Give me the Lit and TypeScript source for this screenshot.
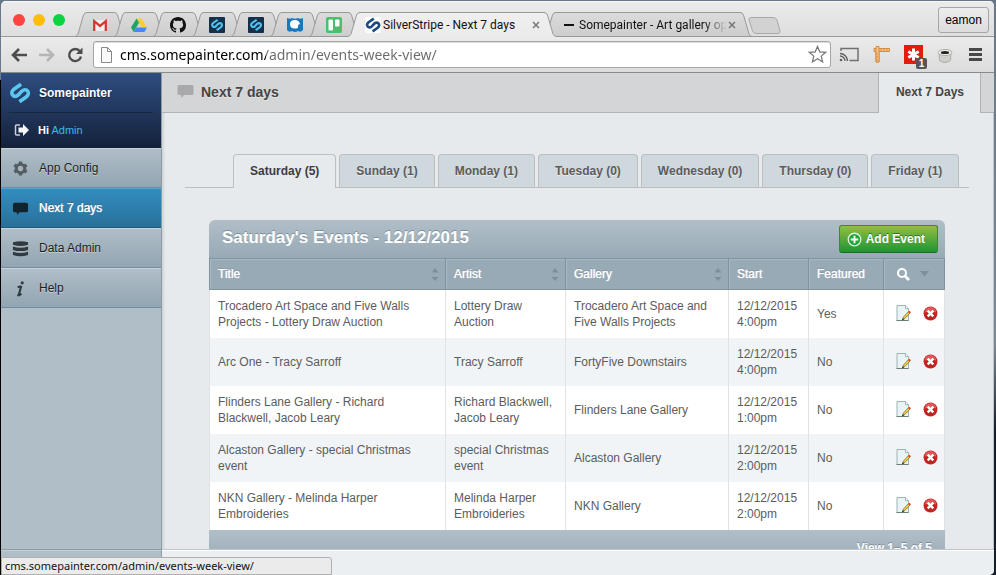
import { LitElement, html, svg, css, nothing } from "lit";
import { customElement, property, state } from "lit/decorators.js";
import { classMap } from "lit/directives/class-map.js";

const sPath = svg`<path d="M11 2L4.500 6.500Q.8 9.800 4 12.500Q6 14 8.500 11.700L11.500 8.500Q14 6.300 16.300 7.500Q19.300 10.200 15.800 13.500L9.500 18" fill="none" stroke="currentColor" stroke-width="3.300"/>`;

const favicons: Record<string, unknown> = {
  gmail: svg`<rect x="1" y="3" width="14" height="11" rx="1" fill="#eee"/><path d="M2.2 14V4.2L8 9l5.800-4.800V14" fill="none" stroke="#d6392f" stroke-width="2.300"/>`,
  drive: svg`<path d="M5.500 1.500h5L16 10.500h-5.200z" fill="#fc3"/><path d="M5.500 1.500L0 10.600 2.600 15 8 5.800z" fill="#1fa463"/><path d="M5.300 10.500H16L13.400 15H2.600z" fill="#4688f4"/>`,
  github: svg`<path fill="#111" d="M8 0C3.580 0 0 3.580 0 8c0 3.540 2.290 6.530 5.470 7.590.4.070.55-.17.55-.38 0-.19-.01-.82-.01-1.490-2.010.37-2.530-.49-2.690-.94-.09-.23-.48-.94-.82-1.130-.28-.15-.68-.52-.01-.53.63-.01 1.080.58 1.230.82.72 1.210 1.870.87 2.330.66.07-.52.28-.87.51-1.070-1.780-.2-3.640-.89-3.640-3.950 0-.87.31-1.590.82-2.150-.08-.2-.36-1.020.08-2.120 0 0 .67-.21 2.200.82.64-.18 1.320-.27 2-.27s1.360.09 2 .27c1.530-1.040 2.200-.82 2.200-.82.44 1.100.16 1.920.08 2.120.51.56.82 1.270.82 2.150 0 3.070-1.870 3.750-3.650 3.950.29.25.54.73.54 1.480 0 1.070-.01 1.930-.01 2.200 0 .21.15.46.55.38A8.010 8.010 0 0016 8c0-4.420-3.580-8-8-8z"/>`,
  silver: svg`<rect width="16" height="16" rx="1" fill="#15304a"/><g color="#4fc3f0" transform="translate(1.500 1.500) scale(.65)">${sPath}</g>`,
  whale: svg`<path d="M0 1q3 1.500 5 0 3 1.500 6 0 2 1.500 5 0v12q-2 3-5 1-3 2-6 0-3 2-5-1z" fill="#1879bd"/><path d="M3 7q0-4 5-4 4 0 5 4l-2 1q1 4-3 3.500-5 0-5-4.500z" fill="#fff"/>`,
  trello: svg`<rect width="16" height="16" rx="2" fill="#4bbf6b"/><rect x="2.500" y="2.500" width="4.500" height="11" rx="1" fill="#fff"/><rect x="9" y="2.500" width="4.500" height="7" rx="1" fill="#fff"/>`,
  stripe: svg`<rect width="16" height="16" rx="2" fill="#fff"/><g color="#1a4a80" transform="scale(.8)">${sPath}</g>`,
  dash: svg`<rect x="3" y="7" width="10" height="2" fill="#111"/>`,
};

const icon = (body: unknown, size = 16, box = 16, cls = "") =>
  html`<svg class=${cls} width=${size} height=${size} viewBox="0 0 ${box} ${box}" aria-hidden="true">${body}</svg>`;

@customElement("browser-tab")
class BrowserTab extends LitElement {
  @property() icon = "";
  @property() label = "";
  @property({ type: Boolean, reflect: true }) active = false;
  static styles = css`
    :host { display: block; position: relative; height: 25px; flex: none; width: 51px; margin-right: -12px; color: #111; }
    :host([label]:not([label=""])) { width: 208px; }
    :host([active]) { z-index: 20; }
    .shape { position: absolute; inset: 0; }
    .row { position: relative; display: flex; align-items: center; height: 25px; box-sizing: border-box; padding: 1px 14px 0 17px; gap: 2px; }
    .fav { flex: none; }
    .label { flex: 1; font: 12px/16px Roboto, sans-serif; white-space: nowrap; overflow: hidden; text-align: left; }
    :host(:not([active])) .label { -webkit-mask-image: linear-gradient(to right, #000 125px, transparent 148px); }
    button { border: 0; background: none; padding: 0; width: 10px; height: 16px; display: flex; align-items: center; }
  `;
  render() {
    const w = this.label ? 208 : 51;
    const d = `M0 24.500Q2 24 3 22L8.500 3Q9.500 .5 12 .5H${w - 12}Q${w - 9.5} .5 ${w - 8.5} 3L${w - 3} 22Q${w - 2} 24 ${w} 24.500`;
    return html`
      <svg class="shape" width=${w} height="25" viewBox="0 0 ${w} 25" aria-hidden="true">
        <defs><linearGradient id="g" x2="0" y2="1"><stop stop-color=${this.active ? "#efefef" : "#dcdcdc"}></stop><stop offset="1" stop-color=${this.active ? "#ebebeb" : "#cdcdcd"}></stop></linearGradient></defs>
        ${this.active ? svg`<path d="${d}V25H0z" fill="url(#g)"/>` : svg`<path d="${d}z" fill="url(#g)"/>`}
        <path d=${d} fill="none" stroke="#999"></path>
        ${this.active ? nothing : svg`<path d="M0 24.500H${w}" stroke="#999"/>`}
      </svg>
      <div class="row">
        <svg class="fav" width="16" height="16" viewBox="0 0 16 16" aria-hidden="true">${favicons[this.icon]}</svg>
        ${this.label
          ? html`<span class="label">${this.label}</span>
              <button aria-label="Close tab"><svg width="8" height="8" viewBox="0 0 8 8"><path d="M1 1l6 6M7 1L1 7" stroke="#777" stroke-width="1.500"/></svg></button>`
          : nothing}
      </div>`;
  }
}

@customElement("browser-chrome")
class BrowserChrome extends LitElement {
  static styles = css`
    :host { display: block; flex: none; }
    button { border: 0; background: none; padding: 0; display: flex; align-items: center; justify-content: center; flex: none; }
    .strip { display: flex; height: 36px; box-sizing: border-box; padding-left: 12px; background: linear-gradient(#ebebeb, #dedede); box-shadow: inset 0 -1px #999, inset 0 1px #f8f8f8; }
    .lights { display: flex; gap: 8px; padding-top: 13px; width: 62px; flex: none; }
    .light { width: 12px; height: 12px; border-radius: 50%; background: #fc4440; }
    .light.min { background: #fdbd0a; }
    .light.max { background: #0cd33f; }
    .tabs { display: flex; align-self: flex-end; flex: none; }
    .new { align-self: flex-end; margin: 0 0 3px 8px; }
    .spacer { flex: 1; }
    .user { width: 51px; height: 26px; margin: 6px 5px 0 0; border: 1px solid #a6a6a6; border-radius: 3px; background: linear-gradient(#ededed, #dcdcdc); font: 12px "Liberation Sans", Arial, sans-serif; color: #000; }
    .bar { display: flex; align-items: center; height: 36px; box-sizing: border-box; border-bottom: 1px solid #8a8a8a; padding: 0 10px 0 9px; background: linear-gradient(#ebebeb, #dcdcdc); }
    .nav { display: flex; gap: 10px; }
    .omni { flex: 1; min-width: 0; display: flex; align-items: center; height: 27px; box-sizing: border-box; border: 1px solid #a5a5a5; border-radius: 3px; background: #fff; margin: 0 8px 0 9px; padding: 0 3px 0 6px; gap: 7px; box-shadow: inset 0 1px #ddd; }
    .url { flex: 1; min-width: 0; border: 0; outline: 0; padding: 0; height: 20px; font: 14px/20px "Noto Sans", sans-serif; background: linear-gradient(to right, #000 146px, #6a6a6a 146px) text; -webkit-text-fill-color: transparent; }
    .ext { display: flex; gap: 13px; }
    .wrap { position: relative; }
    .badge { position: absolute; left: 12px; top: 13px; width: 11px; height: 11px; border-radius: 2px; background: #555; color: #fff; font: bold 10px/11px "Liberation Sans", sans-serif; text-align: center; }
  `;
  render() {
    const pinned = ["gmail", "drive", "github", "silver", "silver", "whale", "trello"];
    return html`
      <div class="strip">
        <div class="lights"><span class="light"></span><span class="light min"></span><span class="light max"></span></div>
        <div class="tabs">
          ${pinned.map((p) => html`<browser-tab icon=${p}></browser-tab>`)}
          <browser-tab icon="stripe" label="SilverStripe - Next 7 days" active></browser-tab>
          <browser-tab icon="dash" label="Somepainter - Art gallery opening"></browser-tab>
        </div>
        <button class="new" aria-label="New tab"><svg width="33" height="17" viewBox="0 0 33 17"><path d="M3 .5H25Q28 .5 29 3L32 14Q32 16.500 30 16.500H8Q5.500 16.500 4.500 14L1 3Q.5 .5 3 .5z" fill="#d2d2d2" stroke="#a8a8a8"/></svg></button>
        <span class="spacer"></span>
        <button class="user">eamon</button>
      </div>
      <div class="bar">
        <div class="nav">
          <button aria-label="Back">${icon(svg`<path d="M9 3L3 9l6 6M3 9h14" fill="none" stroke="#4d4d4d" stroke-width="2.600"/>`, 18, 18)}</button>
          <button aria-label="Forward">${icon(svg`<path d="M9 3l6 6-6 6M15 9H1" fill="none" stroke="#b5b5b5" stroke-width="2.600"/>`, 18, 18)}</button>
          <button aria-label="Reload">${icon(svg`<path d="M14 5.500A6 6 0 1 0 15 10.500" fill="none" stroke="#4d4d4d" stroke-width="2.400"/><path d="M16.500 1.500V8H10z" fill="#4d4d4d"/>`, 18, 18)}</button>
        </div>
        <div class="omni">
          <svg width="13" height="16" viewBox="0 0 13 16" aria-hidden="true"><path d="M1.500 .5h6l4 4v11h-10zM7.500 .5v4h4" fill="#fafafa" stroke="#888"/></svg>
          <input class="url" aria-label="Address" value="cms.somepainter.com/admin/events-week-view/" />
          <button aria-label="Bookmark this page">${icon(svg`<path d="M10 1.500l2.400 5.700 6.200.5-4.700 4 1.500 6.100L10 14.500l-5.400 3.300 1.500-6.100-4.700-4 6.200-.5z" fill="#fff" stroke="#777" stroke-width="1.300"/>`, 19, 20)}</button>
        </div>
        <div class="ext">
          <button aria-label="Cast">${icon(svg`<path d="M2 6V3.500h17v12h-8.500" fill="none" stroke="#707070" stroke-width="1.500"/><path d="M1 8.500a7.500 7.500 0 0 1 7.500 7.500M1 11a5 5 0 0 1 5 5" fill="none" stroke="#606060" stroke-width="1.300"/><circle cx="2" cy="15" r="1.300" fill="#606060"/>`, 20, 20)}</button>
          <button aria-label="Page ruler">${icon(svg`<path d="M2 3.500H17.500v3H7V17H4V6.500H2z" fill="#f8c48c" stroke="#d68b3e"/><path d="M4 1.500h3v15.500H4z" fill="#f8c48c" stroke="#d68b3e"/><path d="M9 4v2M12 4v2M15 4v2M4 9h2M4 12h2M4 15h2" stroke="#d68b3e"/>`, 19, 19)}</button>
          <button class="wrap" aria-label="Passwords">${icon(svg`<rect width="19" height="19" fill="#e31b0c"/><path d="M9.500 3.500v12M4.300 6.500l10.400 6M14.700 6.500l-10.400 6" stroke="#fff" stroke-width="3"/>`, 19, 19)}<span class="badge">1</span></button>
          <button aria-label="Cache">${icon(svg`<path d="M3 7l.5 7.500q5.500 4 11 0L15 7z" fill="#cfcfca" stroke="#adada8"/><ellipse cx="9" cy="6.500" rx="6.800" ry="3" fill="#f2f2ee" stroke="#aaa"/><ellipse cx="9" cy="6.500" rx="4.200" ry="1.600" fill="#222"/>`, 18, 18)}</button>
          <button aria-label="Menu">${icon(svg`<path d="M2 3.500h13M2 8.500h13M2 13.500h13" stroke="#484848" stroke-width="3"/>`, 17, 17)}</button>
        </div>
      </div>`;
  }
}

@customElement("cms-sidebar")
class CmsSidebar extends LitElement {
  static styles = css`
    :host { display: flex; flex-direction: column; flex: none; width: 160px; background: #b0bec7; border-right: 1px solid #8e9ba4; font: 12px/16px "Liberation Sans", Arial, sans-serif; }
    a { text-decoration: none; }
    .head { background: linear-gradient(#2f4d80, #14213a); height: 75px; box-sizing: border-box; padding: 0 8px; color: #fff; }
    .brand, .user { display: flex; align-items: center; }
    .brand { height: 39px; gap: 8px; font-weight: bold; color: #fff; border-bottom: 1px solid #16293f; text-shadow: 0 1px 1px #14213a; }
    .brand svg { color: #5bc6ef; }
    .user { height: 34px; gap: 8px; padding-left: 5px; font-size: 11px; }
    .user a { color: #3ebae0; }
    .item { display: flex; align-items: center; gap: 10px; height: 40px; box-sizing: border-box; padding-left: 11px; color: #1f1f1f; background: linear-gradient(#b0bec7, #92a5b2); border-top: 1px solid #c9d3d9; border-bottom: 1px solid #748d9d; text-shadow: 0 1px #c5d0d7; }
    .item.on { color: #fff; background: linear-gradient(#338dc1, #287099); border-top-color: #55a4d2; border-bottom-color: #1f5a7c; text-shadow: 0 0 1px #fff, 0 -1px #1f5a7c; }
    .item svg { color: #555d63; }
    .item.on svg { color: #12232e; }
    .fill { flex: 1; }
    .toggle { height: 26px; border: 0; border-top: 1px solid #8e9ba4; background: #b0bec7; box-shadow: inset 0 1px #c5d0d7; padding: 5px 0 0 7px; text-align: left; }
  `;
  render() {
    const items: [string, unknown][] = [
      ["App Config", svg`<path d="M9 1.500v15M2.500 5.300l13 7.500M2.500 12.800l13-7.500" stroke="currentColor" stroke-width="3.600"/><circle cx="9" cy="9" r="4.400" fill="none" stroke="currentColor" stroke-width="3.400"/><circle cx="9" cy="9" r="2.800" fill="#a3b2bd"/>`],
      ["Next 7 days", svg`<path d="M3 3h12q2 0 2 2v6q0 2-2 2H8l-2.500 3L5 13H3q-2 0-2-2V5q0-2 2-2z" fill="currentColor"/>`],
      ["Data Admin", svg`<path d="M1 2.500q8-2.500 16 0v2.500q-8 2.500-16 0zM1 7q8 2.500 16 0v3.500q-8 2.500-16 0zM1 12.500q8 2.500 16 0V16q-8 2.500-16 0z" fill="#333a3f"/>`],
      ["Help", svg`<circle cx="10.800" cy="3" r="1.700" fill="#333a3f"/><path d="M6 7.800Q8.500 6.500 9.600 7L7.300 15.500Q8.500 16 10 14.500" fill="none" stroke="#333a3f" stroke-width="2.200"/><path d="M5.500 16.200h3" stroke="#333a3f" stroke-width="2"/>`],
    ];
    return html`
      <div class="head">
        <a class="brand" href="#home">${icon(sPath, 22, 20)}Somepainter</a>
        <div class="user">
          <svg width="16" height="14" viewBox="0 0 16 14" aria-hidden="true"><path d="M6 2H2.500Q1.500 2 1.500 3v8q0 1 1 1H6" fill="none" stroke="#c8ced6" stroke-width="1.500"/><path d="M4.500 4.500H9V1l6 6-6 6V9.500H4.500z" fill="#f4f6f8"/></svg>
          <span><b>Hi</b> <a href="#profile">Admin</a></span>
        </div>
      </div>
      <nav>${items.map(([label, body]) => html`<a href="#" class=${classMap({ item: true, on: label === "Next 7 days" })}>${icon(body, 17, 18)}${label}</a>`)}</nav>
      <div class="fill"></div>
      <button class="toggle" aria-label="Collapse menu"><svg width="12" height="12" viewBox="0 0 12 12"><circle cx="6" cy="6" r="5" fill="#444d53"/></svg></button>`;
  }
}

interface Row { title: string; artist: string; gallery: string; date: string; time: string; featured: string }

@customElement("event-grid")
class EventGrid extends LitElement {
  private rows: Row[] = [
    { title: "Trocadero Art Space and Five Walls Projects - Lottery Draw Auction", artist: "Lottery Draw Auction", gallery: "Trocadero Art Space and Five Walls Projects", date: "12/12/2015", time: "4:00pm", featured: "Yes" },
    { title: "Arc One - Tracy Sarroff", artist: "Tracy Sarroff", gallery: "FortyFive Downstairs", date: "12/12/2015", time: "4:00pm", featured: "No" },
    { title: "Flinders Lane Gallery - Richard Blackwell, Jacob Leary", artist: "Richard Blackwell, Jacob Leary", gallery: "Flinders Lane Gallery", date: "12/12/2015", time: "1:00pm", featured: "No" },
    { title: "Alcaston Gallery - special Christmas event", artist: "special Christmas event", gallery: "Alcaston Gallery", date: "12/12/2015", time: "2:00pm", featured: "No" },
    { title: "NKN Gallery - Melinda Harper Embroideries", artist: "Melinda Harper Embroideries", gallery: "NKN Gallery", date: "12/12/2015", time: "2:00pm", featured: "No" },
  ];
  static styles = css`
    :host { display: block; font: 12px/16px "Liberation Sans", Arial, sans-serif; color: #5c5c5c; }
    button { border: 0; background: none; padding: 0; font: inherit; }
    .top { display: flex; align-items: center; justify-content: space-between; height: 38px; padding: 0 7px 0 13px; border-radius: 6px 6px 0 0; background: linear-gradient(#b0bec7, #98aab6); }
    h2 { margin: 0; padding-bottom: 3px; font-size: 17px; line-height: 20px; color: #fff; text-shadow: 0 -1px #7b8f9c; }
    .add { display: flex; align-items: center; gap: 4px; height: 28px; padding: 0 12px 0 7px; border: 1px solid #29903a; border-bottom-color: #1a6b25; border-radius: 3px; background: linear-gradient(#93be42, #1f9433); color: #fff; font-weight: bold; text-shadow: 0 -1px #1f7a2b; }
    table { width: 100%; border-collapse: separate; border-spacing: 0; table-layout: fixed; }
    .c-artist { width: 120px; }
    .c-gallery { width: 163px; }
    .c-start { width: 80px; }
    .c-feat { width: 75px; }
    .c-act { width: 61px; }
    th { height: 32px; box-sizing: border-box; padding: 0 6px 0 8px; border: 1px solid #7f929f; border-width: 1px 1px 1px 0; box-shadow: inset 1px 1px #a8b7c1; background: #98aab6; color: #fff; font-weight: normal; text-align: left; text-shadow: 0 0 1px #fff, 0 -1px #7b8f9c; }
    th:first-child, td:first-child { border-left-width: 1px; }
    .sort { display: flex; width: 100%; align-items: center; justify-content: space-between; color: inherit; text-shadow: inherit; }
    td { height: 48px; box-sizing: border-box; padding: 8px; border: 0 solid #dfe3e6; border-right-width: 1px; background: #fff; vertical-align: middle; }
    td:last-child { padding: 7px 0 9px 11px; }
    tr:nth-child(even) td { background: #f0f4f7; }
    .tools { display: flex; align-items: center; gap: 9px; padding-left: 3px; }
    .tools button { display: flex; }
    .acts { display: flex; align-items: center; gap: 12px; }
    .acts button { display: flex; }
    .foot { height: 36px; box-sizing: border-box; padding: 10px 13px 0 0; text-align: right; font-weight: bold; color: #fff; background: linear-gradient(#b0bec7, #98aab6); text-shadow: 0 -1px #7b8f9c; }
  `;
  private sortable(label: string) {
    return html`<button class="sort">${label}<svg width="8" height="15" viewBox="0 0 8 15" aria-hidden="true"><path d="M4 1l3.500 4.500H.5zM4 14l3.500-4H.5z" fill="#7f8f9a"/></svg></button>`;
  }
  render() {
    return html`
      <div class="top">
        <h2>Saturday's Events - 12/12/2015</h2>
        <button class="add">
          ${icon(svg`<circle cx="8" cy="8" r="6.700" fill="#1fa83a" stroke="#dff3df" stroke-width="1.400"/><path d="M8 4v8M4 8h8" stroke="#fff" stroke-width="2"/>`, 15)}Add Event
        </button>
      </div>
      <table>
        <colgroup><col /><col class="c-artist" /><col class="c-gallery" /><col class="c-start" /><col class="c-feat" /><col class="c-act" /></colgroup>
        <thead><tr>
          <th>${this.sortable("Title")}</th><th>${this.sortable("Artist")}</th><th>${this.sortable("Gallery")}</th><th>Start</th><th>Featured</th>
          <th><div class="tools"><button aria-label="Filter">${icon(svg`<circle cx="7" cy="7" r="4" fill="none" stroke="#fff" stroke-width="2"/><path d="M10 10l4 4" stroke="#fff" stroke-width="2.600"/>`)}</button><svg width="9" height="6" viewBox="0 0 9 6"><path d="M0 0h9L4.500 5.500z" fill="#7f8f9a"/></svg></div></th>
        </tr></thead>
        <tbody>${this.rows.map((r) => html`<tr>
          <td>${r.title}</td><td>${r.artist}</td><td>${r.gallery}</td><td>${r.date}<br />${r.time}</td><td>${r.featured}</td>
          <td><div class="acts">
            <button aria-label="Edit">${icon(svg`<path d="M2 .5h8.500l3 3v12H2z" fill="#e9f3f3" stroke="#9fb3b3"/><path d="M10.500 .5v3h3" fill="#fff" stroke="#9fb3b3"/><path d="M1.500 15.500h12" stroke="#6d7d7d"/><path d="M7.500 14.500L8.500 12 13.500 6.500 15 8 10 13.500z" fill="#e8cf4a" stroke="#7a6a20" stroke-width=".7"/><path d="M13 7l1.300-1.300L16 7.200 14.600 8.600z" fill="#d8402e"/><path d="M7 15.200l.9-2 1.300 1.200z" fill="#222"/>`)}</button>
            <button aria-label="Delete">${icon(svg`<circle cx="8" cy="8" r="7.400" fill="#cc1f22"/><path d="M2 7a6 6 0 0 1 12 0q-6-2-12 0z" fill="#e35a55"/><path d="M5 5l6 6M11 5l-6 6" stroke="#fff" stroke-width="2.600"/>`, 15)}</button>
          </div></td>
        </tr>`)}</tbody>
      </table>
      <div class="foot">View 1–5 of 5</div>`;
  }
}

@customElement("app-root")
class AppRoot extends LitElement {
  @state() private day = 0;
  private days = ["Saturday (5)", "Sunday (1)", "Monday (1)", "Tuesday (0)", "Wednesday (0)", "Thursday (0)", "Friday (1)"];
  static styles = css`
    :host { display: block; height: 100vh; box-sizing: border-box; padding: 1px 2px 0 1px; background: linear-gradient(#000, #000) 0 80px / 1px 100% no-repeat, linear-gradient(#66778a, #7a8998 60%, #161d2c 75%); font: 12px/16px "Liberation Sans", Arial, sans-serif; position: relative; }
    .window { display: flex; flex-direction: column; height: 100%; overflow: hidden; border-radius: 5px; background: #e6eaed; }
    .body { flex: 1; display: flex; min-height: 0; }
    main { flex: 1; min-width: 0; display: flex; flex-direction: column; box-shadow: inset 2px 0 2px #d0d5d9, inset -1px 0 #bfc5ca; }
    .title { display: flex; justify-content: space-between; flex: none; height: 40px; box-sizing: border-box; border-bottom: 1px solid #b3b3b7; background: #d4d5d7; padding-right: 13px; }
    h1 { display: flex; align-items: center; gap: 7px; margin: 0; padding: 0 0 2px 15px; font-size: 14px; color: #444; text-shadow: 0 1px #e6e6e8; }
    .view { display: flex; align-items: center; height: 40px; box-sizing: border-box; padding: 0 16px 2px 17px; border: 1px solid #b3b3b7; border-width: 0 1px; background: #e6eaed; color: #444; font-weight: bold; text-decoration: none; }
    .content { flex: 1; min-height: 0; overflow: hidden; padding: 41px 25px 0 23px; }
    .days { display: flex; gap: 3px; height: 34px; box-sizing: border-box; padding-left: 48px; border-bottom: 1px solid #bcbec2; }
    .day { flex: none; height: 33px; box-sizing: border-box; padding: 0 16px 1px; border: 1px solid #bcbec2; border-bottom: 0; border-radius: 4px 4px 0 0; background: #cfd8dd; font: bold 12px "Liberation Sans", Arial, sans-serif; color: #5c5c5c; text-shadow: 0 1px #e6eaed; }
    .day.on { height: 34px; padding-bottom: 2px; background: #e6eaed; color: #3c3c3c; }
    event-grid { margin: 32px 24px 0; }
    .south { flex: none; height: 26px; box-sizing: border-box; border-top: 1px solid #c3c3c8; background: #ebeff2; box-shadow: inset 0 1px #fff; }
    .status { position: absolute; left: 1px; bottom: 0; width: 331px; height: 18px; box-sizing: border-box; border: 1px solid #b0b0b0; border-radius: 0 3px 0 0; background: #ebebeb; padding: 0 3px; font: 11px/16px "Noto Sans", sans-serif; color: #111; }
  `;
  render() {
    return html`
      <div class="window">
        <browser-chrome></browser-chrome>
        <div class="body">
          <cms-sidebar></cms-sidebar>
          <main>
            <header class="title">
              <h1><svg width="17" height="15" viewBox="0 0 17 15" aria-hidden="true"><path d="M2 1h13q1.500 0 1.500 1.500v7q0 1.500-1.500 1.500H7l-2.500 3L4 11H2Q.5 11 .5 9.500v-7Q.5 1 2 1z" fill="#a9a9ab"/></svg>Next 7 days</h1>
              <a class="view" href="#view">Next 7 Days</a>
            </header>
            <div class="content">
              <div class="days" role="tablist">
                ${this.days.map((d, i) => html`<button role="tab" aria-selected=${i === this.day} class=${classMap({ day: true, on: i === this.day })} @click=${() => (this.day = i)}>${d}</button>`)}
              </div>
              <event-grid></event-grid>
            </div>
            <div class="south"></div>
          </main>
        </div>
      </div>
      <div class="status">cms.somepainter.com/admin/events-week-view/</div>`;
  }
}
